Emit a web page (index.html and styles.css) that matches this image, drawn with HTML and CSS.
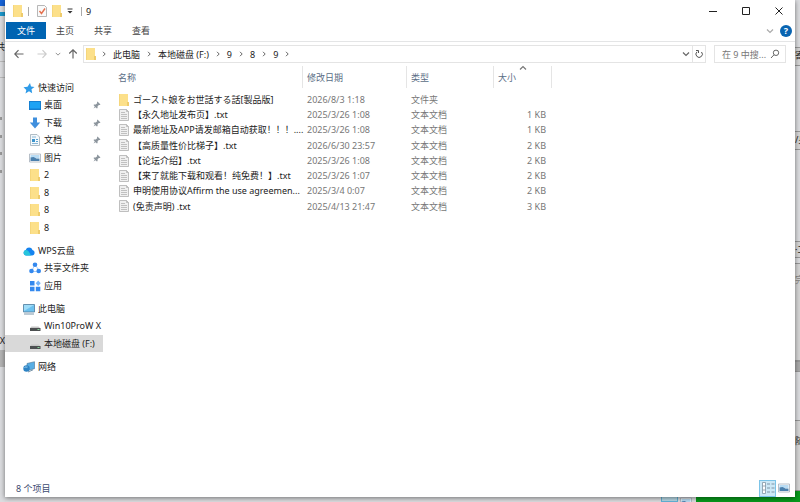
FILE: index.html
```html
<!DOCTYPE html>
<html lang="zh-CN">
   <head>
      <meta charset="UTF-8">
      <meta name="viewport" content="width=device-width, initial-scale=1.0"/>
      <title>9</title>
      <link rel="stylesheet" href="styles.css">
   </head>
   <body>

      <svg class="sprite" aria-hidden="true">
         <symbol id="folder" viewBox="0 0 12 12">
            <path d="M1 0h9v12H1z" fill="#fce08a"/>
            <path d="M9 8h2v4H9z" fill="#eecb6c"/>
            <path d="M1 0h1v12H1z" fill="#f5d67c"/>
         </symbol>
         <symbol id="text-file" viewBox="0 0 12 12">
            <path d="M1.500.5h7l2 2v9h-9z" fill="#f0f0f0" stroke="#b0b0b0" stroke-width=".8"/>
            <path d="M8.500.5v2h2M3 3.500h4M3 5.500h6M3 7.500h6M3 9.500h6" fill="none" stroke="#b4b4b4" stroke-width=".8"/>
         </symbol>
         <symbol id="check-doc" viewBox="0 0 12 12">
            <path d="M1.500.5h7l2 2v9h-9z" fill="#fafafa" stroke="#a4a4a4" stroke-width=".8"/>
            <path d="M3.500 6l2 2.500 3.500-5" fill="none" stroke="#e5704e" stroke-width="1.400"/>
         </symbol>
         <symbol id="star" viewBox="0 0 12 12">
            <path d="M7 1l1 3.500 3.500.5-3 2.300.7 4L6 9.200 2.500 11.500 3.300 8 .5 5.200l4-.4z" fill="#2f9be8"/>
         </symbol>
         <symbol id="desktop" viewBox="0 0 12 12">
            <path d="M0 2h12v9H0z" fill="#1580d2"/>
            <path d="M1 3h10v6.500H1z" fill="#1ea3f4"/>
         </symbol>
         <symbol id="download" viewBox="0 0 12 12">
            <path d="M4 .5h4v5h3.200L6 11.500.8 5.500H4z" fill="#3f8fdd"/>
         </symbol>
         <symbol id="document" viewBox="0 0 12 12">
            <path d="M1.500.5h6.500l2.500 2.500v8.500h-9z" fill="#f4f9fc" stroke="#9eacb6" stroke-width=".8"/>
            <path d="M3 3h4M3 9.500h6" stroke="#8ab6d4"/>
            <path d="M3 5h3v3H3z" fill="#3a93cc"/>
            <path d="M7 5.500h2M7 7.500h2" stroke="#5ba3d0"/>
         </symbol>
         <symbol id="picture" viewBox="0 0 12 12">
            <path d="M.5 2h11v8H.5z" fill="#fff" stroke="#a5afba" stroke-width=".8"/>
            <path d="M1.500 3h9v3h-9z" fill="#b9dcf4"/>
            <path d="M1.500 5.500l3-.5 3 1.500h3v2.500h-9z" fill="#4b80ad"/>
         </symbol>
         <symbol id="cloud" viewBox="0 0 12 12">
            <path d="M3 10.500a2.800 2.800 0 0 1-.3-5.500A3.600 3.600 0 0 1 9.500 5a2.800 2.800 0 0 1-.3 5.500z" fill="#1583ef"/>
            <path d="M3 10.500A2.800 2.800 0 0 1 2.700 5C5 5 6.500 7 8 10.500z" fill="#27c5dc"/>
         </symbol>
         <symbol id="shared" viewBox="0 0 12 12">
            <path d="M5 4.500L3 8M7.500 4.500L9.500 8M3 9.500h5" stroke="#a7ccf7"/>
            <circle cx="6" cy="2.800" r="2.300" fill="#3388ee"/>
            <circle cx="2.500" cy="9" r="2.300" fill="#3388ee"/>
            <circle cx="9.700" cy="9" r="2.300" fill="#3388ee"/>
         </symbol>
         <symbol id="apps" viewBox="0 0 12 12">
            <path d="M1 1h4.500v4.500H1zM1 6.800h4.500v4.500H1zM6.800 6.800h4.500v4.500H6.800z" fill="#3388ee"/>
            <path d="M9.200.5l2.500 2.700-2.500 2.700-2.500-2.700z" fill="#73b2f7"/>
         </symbol>
         <symbol id="computer" viewBox="0 0 12 12">
            <path d="M.5 1.500h11v7.500H.5z" fill="#6bc1ef" stroke="#517c9c" stroke-width=".8"/>
            <path d="M1 2h10L1 8z" fill="#9edcf8"/>
            <path d="M1 11h10" stroke="#7b95a9"/>
         </symbol>
         <symbol id="drive" viewBox="0 0 12 12">
            <path d="M2.500 6.500h7L11 8H1z" fill="#c5c5c5"/>
            <path d="M1 8h10.500v3H1z" fill="#4c4f51"/>
            <path d="M8.500 9.500h2" stroke="#86d69a"/>
         </symbol>
         <symbol id="network" viewBox="0 0 12 12">
            <path d="M4 2.500l7.500-1.800v7L4 9.500z" fill="#58aee4" stroke="#4c7695" stroke-width=".6"/>
            <path d="M5 11l5-2.200" stroke="#7491a7"/>
            <circle cx="3.500" cy="7.500" r="3.200" fill="#2d83c4"/>
            <path d="M1.500 6.500c1-1 2 0 3-.5" fill="none" stroke="#a4d8f3"/>
         </symbol>
         <symbol id="pin" viewBox="0 0 8 8">
            <path d="M4.500.5l3 3-.8.500-.9-.1-1.300 1.500.1 1.600-.7.600L2.600 6.200.5 7.500l1.300-2.100L.5 4l.6-.6 1.600.1 1.500-1.300-.2-1z" fill="#8c959d"/>
         </symbol>
         <symbol id="chevron-right" viewBox="0 0 6 6">
            <path d="M2 .8L4.200 3 2 5.200" fill="none" stroke="currentColor"/>
         </symbol>
         <symbol id="chevron-down" viewBox="0 0 8 8">
            <path d="M1 2.500l3 3 3-3" fill="none" stroke="currentColor" stroke-width="1.200"/>
         </symbol>
         <symbol id="arrow" viewBox="0 0 10 10">
            <path d="M9.500 5H1M4.500 1.200L.8 5l3.700 3.800" fill="none" stroke="currentColor" stroke-width="1.200"/>
         </symbol>
         <symbol id="details-view" viewBox="0 0 14 14">
            <path d="M1.500 1.500h3v11h-3zM1.500 5h3M1.500 9h3" fill="#fff" stroke="#8296a5" stroke-width=".8"/>
            <path d="M6 3h3M10.500 3h3M6 7h3M10.500 7h3M6 11h3M10.500 11h3" stroke="#7f94a6"/>
         </symbol>
      </svg>

      <div class="desktop">
         <!-- windows that show behind the explorer -->
         <div class="behind" aria-hidden="true">
            <span class="left-logo"></span>
            <span class="left-line"></span>
            <span class="left-text left-share">共</span>
            <span class="left-rule rule-a"></span>
            <span class="left-rule rule-b"></span>
            <span class="dot dot-a"></span>
            <span class="dot dot-b"></span>
            <span class="dot dot-c"></span>
            <span class="dot dot-d"></span>
            <span class="left-text left-drive">X</span>
            <span class="left-selection"></span>
            <span class="panel panel-a">寄</span>
            <span class="panel panel-b">/身</span>
            <span class="panel panel-c">·工</span>
            <span class="panel panel-d">完</span>
            <span class="panel panel-e"></span>
            <span class="panel panel-f">随</span>
            <span class="view-behind"></span>
            <svg class="picture-behind"><use href="#picture"/></svg>
            <span class="green-bar"></span>
         </div>

         <main class="window">
            <header class="title-bar">
               <svg class="icon"><use href="#folder"/></svg>
               <span class="divider"></span>
               <button class="quick" aria-label="属性"><svg class="icon"><use href="#check-doc"/></svg></button>
               <button class="quick" aria-label="新建文件夹"><svg class="icon"><use href="#folder"/></svg></button>
               <button class="quick-menu" aria-label="自定义快速访问工具栏">
                  <svg viewBox="0 0 6 6"><path d="M.5 1h5" stroke="#333"/><path d="M.5 3h5L3 5.500z" fill="#333"/></svg>
               </button>
               <span class="divider"></span>
               <h1>9</h1>
               <div class="window-buttons">
                  <button aria-label="最小化"><svg viewBox="0 0 8 8"><path d="M0 4.500h8"/></svg></button>
                  <button aria-label="最大化"><svg viewBox="0 0 8 8"><path d="M.5.5h7v7h-7z"/></svg></button>
                  <button aria-label="关闭"><svg viewBox="0 0 8 8"><path d="M.5.5l7 7M7.500.5l-7 7"/></svg></button>
               </div>
            </header>

            <nav class="ribbon">
               <button class="tab file-tab">文件</button>
               <button class="tab">主页</button>
               <button class="tab">共享</button>
               <button class="tab">查看</button>
               <button class="expand" aria-label="展开功能区"><svg class="small"><use href="#chevron-down"/></svg></button>
               <button class="help" aria-label="帮助">?</button>
            </nav>

            <div class="address-row">
               <button class="nav back" aria-label="后退"><svg><use href="#arrow"/></svg></button>
               <button class="nav forward" aria-label="前进" disabled><svg><use href="#arrow"/></svg></button>
               <button class="nav recent" aria-label="最近位置"><svg class="small"><use href="#chevron-down"/></svg></button>
               <button class="nav up" aria-label="向上"><svg><use href="#arrow"/></svg></button>
               <div class="address">
                  <svg class="icon"><use href="#folder"/></svg>
                  <svg class="sep"><use href="#chevron-right"/></svg>
                  <a href="#">此电脑</a>
                  <svg class="sep"><use href="#chevron-right"/></svg>
                  <a href="#">本地磁盘 (F:)</a>
                  <svg class="sep"><use href="#chevron-right"/></svg>
                  <a href="#">9</a>
                  <svg class="sep"><use href="#chevron-right"/></svg>
                  <a href="#">8</a>
                  <svg class="sep"><use href="#chevron-right"/></svg>
                  <a href="#">9</a>
                  <svg class="sep"><use href="#chevron-right"/></svg>
                  <button class="history" aria-label="以前的位置"><svg class="small"><use href="#chevron-down"/></svg></button>
                  <button class="refresh" aria-label="刷新">
                     <svg viewBox="0 0 10 10"><path d="M7.500 3A3.200 3.200 0 1 1 3 2.800M2 1.500h2.500V4" fill="none" stroke="#555"/></svg>
                  </button>
               </div>
               <div class="search">
                  <input type="text" placeholder="在 9 中搜..." aria-label="搜索">
                  <svg viewBox="0 0 10 10"><circle cx="6" cy="3.800" r="2.700"/><path d="M4 5.800L1 9"/></svg>
               </div>
            </div>

            <div class="content">
               <nav class="sidebar">
                  <ul>
                     <li><a class="root" href="#"><svg class="icon"><use href="#star"/></svg>快速访问</a></li>
                     <li><a href="#"><svg class="icon"><use href="#desktop"/></svg>桌面<svg class="pin"><use href="#pin"/></svg></a></li>
                     <li><a href="#"><svg class="icon"><use href="#download"/></svg>下载<svg class="pin"><use href="#pin"/></svg></a></li>
                     <li><a href="#"><svg class="icon"><use href="#document"/></svg>文档<svg class="pin"><use href="#pin"/></svg></a></li>
                     <li><a href="#"><svg class="icon"><use href="#picture"/></svg>图片<svg class="pin"><use href="#pin"/></svg></a></li>
                     <li><a href="#"><svg class="icon"><use href="#folder"/></svg>2</a></li>
                     <li><a href="#"><svg class="icon"><use href="#folder"/></svg>8</a></li>
                     <li><a href="#"><svg class="icon"><use href="#folder"/></svg>8</a></li>
                     <li><a href="#"><svg class="icon"><use href="#folder"/></svg>8</a></li>
                  </ul>
                  <ul>
                     <li><a class="root" href="#"><svg class="icon"><use href="#cloud"/></svg>WPS云盘</a></li>
                     <li><a href="#"><svg class="icon"><use href="#shared"/></svg>共享文件夹</a></li>
                     <li><a href="#"><svg class="icon"><use href="#apps"/></svg>应用</a></li>
                  </ul>
                  <ul>
                     <li><a class="root" href="#"><svg class="icon"><use href="#computer"/></svg>此电脑</a></li>
                     <li><a href="#"><svg class="icon"><use href="#drive"/></svg>Win10ProW X</a></li>
                     <li class="selected"><a href="#"><svg class="icon"><use href="#drive"/></svg>本地磁盘 (F:)</a></li>
                  </ul>
                  <ul>
                     <li><a class="root" href="#"><svg class="icon"><use href="#network"/></svg>网络</a></li>
                  </ul>
               </nav>

               <div class="files">
                  <table>
                     <thead>
                        <tr>
                           <th class="name">名称</th>
                           <th class="date">修改日期</th>
                           <th class="type">类型</th>
                           <th class="size">大小<svg class="sort"><use href="#chevron-down"/></svg></th>
                        </tr>
                     </thead>
                     <tbody>
                        <tr><td class="name"><svg class="icon"><use href="#folder"/></svg><span lang="ja">ゴースト娘をお世話する話[製品版]</span></td><td>2026/8/3 1:18</td><td>文件夹</td><td></td></tr>
                        <tr><td class="name"><svg class="icon"><use href="#text-file"/></svg><span>【永久地址发布页】.txt</span></td><td>2025/3/26 1:08</td><td>文本文档</td><td>1 KB</td></tr>
                        <tr><td class="name"><svg class="icon"><use href="#text-file"/></svg><span>最新地址及APP请发邮箱自动获取！！！....</span></td><td>2025/3/26 1:08</td><td>文本文档</td><td>1 KB</td></tr>
                        <tr><td class="name"><svg class="icon"><use href="#text-file"/></svg><span>【高质量性价比梯子】.txt</span></td><td>2026/6/30 23:57</td><td>文本文档</td><td>2 KB</td></tr>
                        <tr><td class="name"><svg class="icon"><use href="#text-file"/></svg><span>【论坛介绍】.txt</span></td><td>2025/3/26 1:08</td><td>文本文档</td><td>2 KB</td></tr>
                        <tr><td class="name"><svg class="icon"><use href="#text-file"/></svg><span>【来了就能下载和观看！纯免费！】.txt</span></td><td>2025/3/26 1:07</td><td>文本文档</td><td>2 KB</td></tr>
                        <tr><td class="name"><svg class="icon"><use href="#text-file"/></svg><span>申明使用协议Affirm the use agreemen...</span></td><td>2025/3/4 0:07</td><td>文本文档</td><td>2 KB</td></tr>
                        <tr><td class="name"><svg class="icon"><use href="#text-file"/></svg><span>(免责声明) .txt</span></td><td>2025/4/13 21:47</td><td>文本文档</td><td>3 KB</td></tr>
                     </tbody>
                  </table>
               </div>
            </div>

            <footer class="status-bar">
               <span>8 个项目</span>
               <button class="view active" aria-label="详细信息"><svg><use href="#details-view"/></svg></button>
               <button class="view" aria-label="大缩略图"><svg class="icon"><use href="#picture"/></svg></button>
            </footer>
         </main>
      </div>

   </body>
</html>
```
FILE: styles.css
```css
*
{
   box-sizing: border-box;
}

body
{
   margin: 0;
   font: 9px/15px "Noto Sans", "Noto Sans CJK SC", sans-serif;
   color: #222;
}

[lang="ja"]
{
   font-family: "Noto Sans", "Noto Sans CJK JP", sans-serif;
}

button
{
   display: flex;
   align-items: center;
   justify-content: center;
   margin: 0;
   padding: 0;
   border: 0;
   background: none;
   font: inherit;
   color: inherit;
}

a
{
   color: inherit;
   text-decoration: none;
}

ul
{
   margin: 0;
   padding: 0;
   list-style: none;
}

svg
{
   flex: none;
}

.sprite
{
   display: none;
}

.icon
{
   width: 12px;
   height: 12px;
}

.small
{
   width: 8px;
   height: 8px;
}

/* desktop */

.desktop
{
   position: relative;
   height: 100vh;
   padding: 0 5px 5px;
   overflow: hidden;
   background: #dcdde0;
}

.behind span,
.picture-behind
{
   position: absolute;
}

.left-logo
{
   left: 0;
   top: 0;
   width: 5px;
   height: 6px;
   background: #1764d8;
}

.left-line
{
   left: 0;
   top: 12px;
   width: 5px;
   height: 4px;
   background: #1c97cc;
}

.left-text
{
   right: calc(100% - 5px);
}

.left-share
{
   top: 39px;
}

.left-drive
{
   top: 333px;
}

.left-rule
{
   left: 0;
   width: 5px;
   height: 1px;
   background: #bbb;
}

.rule-a
{
   top: 61px;
}

.rule-b
{
   top: 77px;
}

.dot
{
   left: 0;
   width: 2px;
   height: 3px;
   background: #999;
}

.dot-a
{
   top: 117px;
}

.dot-b
{
   top: 135px;
}

.dot-c
{
   top: 152px;
}

.dot-d
{
   top: 170px;
}

.left-selection
{
   left: 0;
   top: 350px;
   width: 5px;
   height: 17px;
   background: #b4b4b4;
}

.panel
{
   left: calc(100% - 5px);
   width: 9px;
   overflow: hidden;
   border: solid #999;
   border-width: 1px 0;
   background: #d6d6d6;
   white-space: nowrap;
}

.panel-a
{
   top: 47px;
   height: 19px;
}

.panel-b
{
   top: 131px;
   height: 19px;
}

.panel-c
{
   top: 241px;
   height: 17px;
}

.panel-d
{
   top: 263px;
   height: 98px;
   padding-top: 8px;
   color: #888;
}

.panel-e
{
   top: 361px;
   height: 11px;
   background: #aaa;
}

.panel-f
{
   top: 420px;
   height: 71px;
   padding-top: 12px;
}

.view-behind
{
   left: 661px;
   bottom: 0;
   width: 17px;
   height: 8px;
   border: 1px solid #62b4d8;
   background: #b8d9e6;
}

.picture-behind
{
   left: 680px;
   bottom: -6px;
   width: 12px;
   height: 12px;
}

.green-bar
{
   left: 696px;
   right: 0;
   bottom: 0;
   height: 11px;
   background: #089a1c;
}

/* explorer window */

.window
{
   position: relative;
   display: flex;
   flex-direction: column;
   height: 100%;
   background: #fff;
   box-shadow: 0 1px 5px rgba(0, 0, 0, 0.5);
}

.title-bar
{
   display: flex;
   align-items: center;
   height: 22px;
   padding-left: 7px;
}

.divider
{
   width: 1px;
   height: 9px;
   margin: 0 4px;
   background: #aaa;
}

.quick
{
   margin-left: 3px;
}

.quick-menu
{
   margin: 0 4px;
}

.quick-menu svg
{
   width: 6px;
   height: 6px;
}

h1
{
   margin: 0;
   font: inherit;
}

.window-buttons
{
   display: flex;
   margin-left: auto;
}

.window-buttons button
{
   width: 33px;
   height: 22px;
}

.window-buttons svg
{
   width: 8px;
   height: 8px;
   fill: none;
   stroke: #222;
}

.ribbon
{
   display: flex;
   align-items: center;
   height: 20px;
   padding: 0 3px 2px 1px;
   border-bottom: 1px solid #e4e5e6;
}

.tab
{
   width: 38px;
   height: 17px;
   color: #444;
}

.file-tab
{
   width: 40px;
   background: #0064b2;
   color: #fff;
}

.expand
{
   margin: 0 6px 0 auto;
   color: #aaa;
}

.help
{
   width: 12px;
   height: 12px;
   border-radius: 50%;
   background: #0864b1;
   color: #fff;
   font-weight: bold;
}

.address-row
{
   display: flex;
   align-items: center;
   height: 24px;
   padding: 0 9px;
}

.nav
{
   color: #666;
}

.nav svg
{
   width: 10px;
   height: 10px;
}

.forward
{
   margin-left: 13px;
   color: #ccc;
}

.forward svg
{
   transform: scaleX(-1);
}

.recent
{
   margin: 0 7px 0 8px;
   color: #888;
}

.recent .small
{
   width: 6px;
   height: 6px;
}

.up svg
{
   transform: rotate(90deg);
}

.address
{
   display: flex;
   flex: 1;
   align-items: center;
   height: 18px;
   margin: 0 8px 0 5px;
   padding-left: 1px;
   border: 1px solid #e4e4e4;
}

.sep
{
   width: 6px;
   height: 6px;
   margin: 0 6px;
   color: #666;
}

.icon + .sep
{
   margin-left: 4px;
}

.history
{
   margin: 0 2px 0 auto;
   color: #666;
}

.refresh
{
   width: 13px;
   height: 16px;
   border-left: 1px solid #e4e4e4;
}

.refresh svg
{
   width: 10px;
   height: 10px;
}

.search
{
   display: flex;
   align-items: center;
   width: 72px;
   height: 18px;
   padding: 0 5px 0 7px;
   border: 1px solid #e4e4e4;
}

.search input
{
   flex: 1;
   min-width: 0;
   padding: 0;
   border: 0;
   outline: 0;
   background: none;
   font: inherit;
}

.search input::placeholder
{
   color: #777;
}

.search svg
{
   width: 10px;
   height: 10px;
   fill: none;
   stroke: #666;
}

.content
{
   display: flex;
   flex: 1;
   min-height: 0;
}

.sidebar
{
   width: 98px;
   padding-top: 13px;
}

.sidebar ul
{
   margin-bottom: 6px;
}

.sidebar a
{
   display: flex;
   align-items: center;
   gap: 3px;
   height: 17px;
   padding-left: 24px;
   white-space: nowrap;
}

.sidebar li:nth-child(even)
{
   padding-bottom: 1px;
}

.sidebar .root
{
   padding-left: 18px;
}

.sidebar .selected
{
   background: #d9d9d9;
}

.pin
{
   width: 8px;
   height: 8px;
   margin: 0 2px 0 auto;
}

.files
{
   flex: 1;
   padding-left: 10px;
}

table
{
   width: 439px;
   border-collapse: separate;
   border-spacing: 0;
   table-layout: fixed;
}

th
{
   position: relative;
   height: 22px;
   padding: 0 4px;
   border-right: 1px solid #e5e5e5;
   font-weight: normal;
   text-align: left;
   color: #5a6d85;
}

td
{
   height: 15px;
   padding: 0 4px;
   white-space: nowrap;
   color: #777;
}

/* every fourth row is a pixel taller */
tr:nth-child(4n) td
{
   height: 16px;
}

tbody::before
{
   content: "";
   display: block;
   height: 4px;
}

th.name
{
   width: 190px;
   padding-left: 5px;
}

th.date
{
   width: 104px;
}

th.type
{
   width: 87px;
}

td:last-child
{
   padding-right: 6px;
   text-align: right;
}

td.name
{
   display: flex;
   align-items: center;
   gap: 3px;
   padding-left: 5px;
   color: #222;
}

.sort
{
   position: absolute;
   top: -2px;
   left: 25px;
   width: 8px;
   height: 8px;
   color: #777;
   transform: rotate(180deg);
}

.status-bar
{
   display: flex;
   align-items: center;
   height: 18px;
   padding: 0 5px 0 11px;
   color: #3b4a70;
}

.status-bar span
{
   margin-right: auto;
}

.view
{
   height: 17px;
   margin-left: 2px;
}

.view.active
{
   width: 17px;
   border: 1px solid #7cc4e8;
   background: #cce8f6;
}

.view.active svg
{
   width: 14px;
   height: 14px;
}
```
